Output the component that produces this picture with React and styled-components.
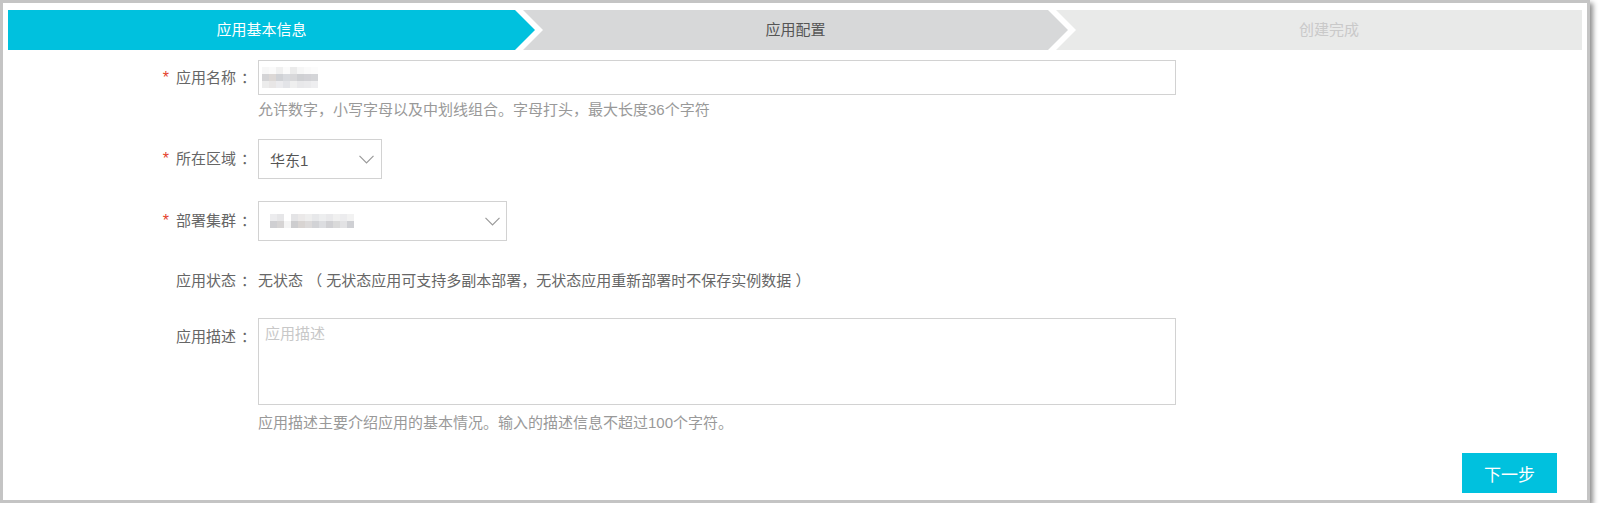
import React from "react";
import styled, { createGlobalStyle } from "styled-components";

const Global = createGlobalStyle`
  html, body { margin: 0; padding: 0; background: #fff; }
  body {
    font-family: "Liberation Sans", "Noto Sans CJK SC", sans-serif;
    font-size: 15px;
    color: #666;
  }
  * { box-sizing: border-box; }
`;

const Frame = styled.div`
  width: 1590px;
  height: 503px;
  border: 3px solid #c4c4c4;
  box-shadow: 3px 3px 5px rgba(0, 0, 0, 0.45);
  background: #fff;
  padding: 7px 5px;
  display: flex;
  flex-direction: column;
`;

const Steps = styled.div`
  display: flex;
  height: 40px;
  flex-shrink: 0;
`;

const clips = {
  first: "polygon(0 0, calc(100% - 20px) 0, 100% 50%, calc(100% - 20px) 100%, 0 100%)",
  middle:
    "polygon(0 0, calc(100% - 20px) 0, 100% 50%, calc(100% - 20px) 100%, 0 100%, 20px 50%)",
  last: "polygon(0 0, 100% 0, 100% 100%, 0 100%, 20px 50%)",
};

const Step = styled.div`
  height: 40px;
  line-height: 40px;
  text-align: center;
  font-size: 15px;
  background: ${(p) => p.$bg};
  color: ${(p) => p.$fg};
  clip-path: ${(p) => clips[p.$pos]};
  width: ${(p) => (p.$w ? `${p.$w}px` : "auto")};
  flex: ${(p) => (p.$w ? "0 0 auto" : "1 1 auto")};
  margin-left: ${(p) => (p.$pos === "first" ? 0 : -12)}px;
  padding-left: ${(p) => (p.$pos === "first" ? 0 : 20)}px;
  padding-right: ${(p) => (p.$pos === "last" ? 0 : 20)}px;
`;

const Form = styled.div`
  display: flex;
  flex-direction: column;
  flex: 1;
`;

const Item = styled.div`
  display: flex;
  align-items: flex-start;
  margin-top: ${(p) => p.$mt}px;
`;

const Label = styled.div`
  width: 246px;
  flex-shrink: 0;
  text-align: right;
  color: #666;
  font-size: 15px;
  line-height: ${(p) => p.$lh || 20}px;
  padding-top: ${(p) => p.$pt || 0}px;
  white-space: nowrap;
`;

const Colon = styled.span`
  display: inline-block;
  width: 18px;
  text-align: left;
  padding-left: 5px;
`;

const Star = styled.span`
  color: #e4422b;
  margin-right: 7px;
  font-family: "Liberation Sans", sans-serif;
  font-size: 16px;
`;

const Control = styled.div`
  margin-left: 4px;
  display: flex;
  flex-direction: column;
`;

const TextBox = styled.div`
  width: 918px;
  height: 35px;
  border: 1px solid #d2d2d2;
  display: flex;
  align-items: center;
  padding-left: 3px;
`;

const Select = styled.div`
  width: ${(p) => p.$w}px;
  height: 40px;
  border: 1px solid #d2d2d2;
  display: flex;
  align-items: center;
  justify-content: space-between;
  padding: 0 ${(p) => p.$pr}px 0 11px;
  color: #555;
  font-size: 15px;
`;

const Chevron = () => (
  <svg width="15" height="9" viewBox="0 0 15 9" fill="none">
    <polyline points="0.5,0.8 7.5,7.8 14.5,0.8" stroke="#9a9a9a" strokeWidth="1.2" />
  </svg>
);

const Help = styled.div`
  color: #999;
  font-size: 15px;
  line-height: 20px;
  margin-top: ${(p) => p.$mt}px;
  white-space: nowrap;
`;

const StatusText = styled.div`
  color: #666;
  font-size: 15px;
  line-height: 20px;
  white-space: pre;
`;

const TextArea = styled.div`
  width: 918px;
  height: 87px;
  border: 1px solid #d2d2d2;
  padding: 5px 6px;
  color: #c8c8c8;
  font-size: 15px;
  line-height: 20px;
`;

const Footer = styled.div`
  display: flex;
  justify-content: flex-end;
  margin-top: 20px;
  padding-right: 25px;
`;

const NextButton = styled.button`
  width: 95px;
  height: 40px;
  border: none;
  background: #00c1de;
  color: #fff;
  font-family: "Liberation Sans", "Noto Sans CJK SC", sans-serif;
  font-size: 17px;
  padding: 0;
  cursor: pointer;
`;

const Mosaic = styled.div`
  display: grid;
  grid-template-columns: repeat(${(p) => p.$cols}, 7px);
  grid-auto-rows: 7px;
`;

const Cell = styled.div`
  background: ${(p) => p.$c};
`;

const nameMosaic = [
  ["#f7f7f7", "#fafafa", "#f0f0f0", "#fbfbfb", "#ebebeb", "#f6f6f6", "#fafafa", "#fcfcfc"],
  ["#d4d4d6", "#dcd8d6", "#d0d2d6", "#d8dade", "#d8d8da", "#cfd0d3", "#d2d2d6", "#d4d5d8"],
  ["#ececec", "#e8e6e6", "#ebebee", "#e3e4e8", "#efefef", "#e8e8ea", "#eaeaec", "#eeeef0"],
];

const clusterMosaic = [
  ["#ececee", "#e6e6e8", "#ffffff", "#e4e4e6", "#ebe9e9", "#eeeeee", "#e7e8ea", "#edeeef", "#e9e9eb", "#f0f0f0", "#ececee", "#f2f2f2"],
  ["#cfcfd2", "#d6d4d4", "#f4f4f4", "#cdcdcf", "#d8d4d2", "#dcdada", "#d2d3d6", "#dcdde0", "#d0d0d3", "#dadada", "#e2e2e4", "#cfd0d4"],
];

const MosaicBlock = ({ rows }) => (
  <Mosaic $cols={rows[0].length}>
    {rows.flat().map((c, i) => (
      <Cell key={i} $c={c} />
    ))}
  </Mosaic>
);

export default function App() {
  return (
    <>
      <Global />
      <Frame>
        <Steps>
          <Step $pos="first" $w={527} $bg="#00c1de" $fg="#ffffff">
            应用基本信息
          </Step>
          <Step $pos="middle" $w={545} $bg="#d7d8d9" $fg="#555555">
            应用配置
          </Step>
          <Step $pos="last" $bg="#e9eae9" $fg="#c9c9c9">
            创建完成
          </Step>
        </Steps>
        <Form>
          <Item $mt={10}>
            <Label $lh={35}>
              <Star>*</Star>应用名称<Colon>：</Colon>
            </Label>
            <Control>
              <TextBox>
                <MosaicBlock rows={nameMosaic} />
              </TextBox>
              <Help $mt={5}>允许数字，小写字母以及中划线组合。字母打头，最大长度36个字符</Help>
            </Control>
          </Item>
          <Item $mt={19}>
            <Label $lh={40}>
              <Star>*</Star>所在区域<Colon>：</Colon>
            </Label>
            <Control>
              <Select $w={124} $pr={7}>
                <span>华东1</span>
                <Chevron />
              </Select>
            </Control>
          </Item>
          <Item $mt={22}>
            <Label $lh={40}>
              <Star>*</Star>部署集群<Colon>：</Colon>
            </Label>
            <Control>
              <Select $w={249} $pr={6}>
                <MosaicBlock rows={clusterMosaic} />
                <Chevron />
              </Select>
            </Control>
          </Item>
          <Item $mt={30}>
            <Label>
              应用状态<Colon>：</Colon>
            </Label>
            <Control>
              <StatusText>无状态 （ 无状态应用可支持多副本部署，无状态应用重新部署时不保存实例数据 ）</StatusText>
            </Control>
          </Item>
          <Item $mt={27}>
            <Label $pt={9}>
              应用描述<Colon>：</Colon>
            </Label>
            <Control>
              <TextArea>应用描述</TextArea>
              <Help $mt={8}>应用描述主要介绍应用的基本情况。输入的描述信息不超过100个字符。</Help>
            </Control>
          </Item>
          <Footer>
            <NextButton>下一步</NextButton>
          </Footer>
        </Form>
      </Frame>
    </>
  );
}
